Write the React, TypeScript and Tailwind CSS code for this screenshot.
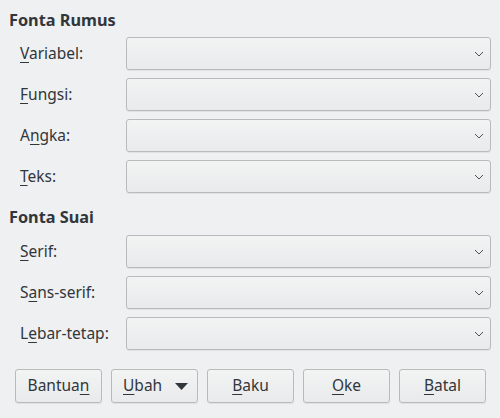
const font = { fontFamily: '"Noto Sans", "Open Sans", sans-serif' };

function U({ children }: { children: string }) {
  return <span className="underline decoration-1 underline-offset-[3px]">{children}</span>;
}

function Chevron() {
  return (
    <svg width="10" height="6" viewBox="0 0 10 6" className="text-[#4d5257]">
      <path d="M1 1 L5 5 L9 1" fill="none" stroke="currentColor" strokeWidth="1" />
    </svg>
  );
}

function Combo() {
  return (
    <div className="h-[33px] flex items-center justify-end pr-[6px] rounded-[3px] border border-[#b9babb] bg-gradient-to-b from-[#f2f3f3] to-[#e9eaeb] shadow-[0_1px_0_rgba(0,0,0,0.06)]">
      <Chevron />
    </div>
  );
}

function Row({ label }: { label: React.ReactNode }) {
  return (
    <>
      <div className="h-[33px] flex items-center text-[15.5px] text-[#31363b]">{label}</div>
      <Combo />
    </>
  );
}

function Btn({ children }: { children: React.ReactNode }) {
  return (
    <div className="h-[34px] flex items-center justify-center rounded-[3px] border border-[#b9babb] bg-gradient-to-b from-[#f2f3f3] to-[#e9eaeb] shadow-[0_1px_0_rgba(0,0,0,0.06)] text-[15.5px] text-[#31363b]">
      {children}
    </div>
  );
}

export default function App() {
  return (
    <div className="w-[500px] h-[418px] bg-[#eff0f1] px-[9px] pt-[10px]" style={font}>
      {/* Fonta Rumus */}
      <h2 className="h-[20px] leading-[20px] text-[16.3px] font-bold text-[#31363b]">Fonta Rumus</h2>
      <div className="mt-[7px] pl-[11px] grid grid-cols-[106px_1fr] gap-y-[8px]">
        <Row label={<span><U>V</U>ariabel:</span>} />
        <Row label={<span><U>F</U>ungsi:</span>} />
        <Row label={<span>A<U>n</U>gka:</span>} />
        <Row label={<span><U>T</U>eks:</span>} />
      </div>

      {/* Fonta Suai */}
      <h2 className="mt-[14px] h-[20px] leading-[20px] text-[16.3px] font-bold text-[#31363b]">Fonta Suai</h2>
      <div className="mt-[8px] pl-[11px] grid grid-cols-[106px_1fr] gap-y-[8px]">
        <Row label={<span><U>S</U>erif:</span>} />
        <Row label={<span>S<U>a</U>ns-serif:</span>} />
        <Row label={<span>L<U>e</U>bar-tetap:</span>} />
      </div>

      {/* Buttons */}
      <div className="mt-[19px] pl-[6px] pr-[5px] grid grid-cols-5 gap-[9px]">
        <Btn><span>Bantua<U>n</U></span></Btn>
        <div className="h-[34px] flex items-center justify-between pl-[11px] pr-[9px] rounded-[3px] border border-[#b9babb] bg-gradient-to-b from-[#f2f3f3] to-[#e9eaeb] shadow-[0_1px_0_rgba(0,0,0,0.06)] text-[15.5px] text-[#31363b]">
          <span><U>U</U>bah</span>
          <svg width="13" height="7" viewBox="0 0 13 7">
            <path d="M0 0 H13 L6.5 7 Z" fill="#31363b" />
          </svg>
        </div>
        <Btn><span><U>B</U>aku</span></Btn>
        <Btn><span><U>O</U>ke</span></Btn>
        <Btn><span><U>B</U>atal</span></Btn>
      </div>
    </div>
  );
}
